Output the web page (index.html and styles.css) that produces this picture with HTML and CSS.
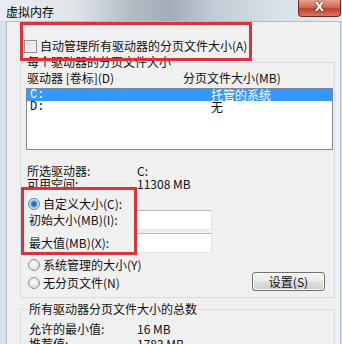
FILE: index.html
```html
<!DOCTYPE html>
<html lang="zh-CN">
<head>
    <meta charset="UTF-8">
    <meta name="viewport" content="width=device-width, initial-scale=1.0">
    <title>虚拟内存</title>
    <link rel="stylesheet" href="styles.css">
</head>
<body>
    <div class="window">
        <div class="titlebar">
            <span class="title">虚拟内存</span>
            <span class="close">X</span>
        </div>

        <div class="client">
            <label class="auto-row">
                <span class="checkbox"></span>
                <span>自动管理所有驱动器的分页文件大小(A)</span>
            </label>

            <fieldset class="group drives">
                <legend>每个驱动器的分页文件大小</legend>
                <div class="list-head">
                    <span>驱动器 [卷标](D)</span>
                    <span>分页文件大小(MB)</span>
                </div>
                <div class="listbox">
                    <div class="row selected"><span>C:</span><span>托管的系统</span></div>
                    <div class="row"><span>D:</span><span>无</span></div>
                </div>

                <div class="info">
                    <span>所选驱动器:</span><span>C:</span>
                    <span>可用空间:</span><span>11308 MB</span>
                </div>

                <div class="option">
                    <span class="radio on"></span>
                    <span>自定义大小(C):</span>
                </div>
                <div class="size-row">
                    <span>初始大小(MB)(I):</span>
                    <input class="textbox" type="text">
                </div>
                <div class="size-row">
                    <span>最大值(MB)(X):</span>
                    <input class="textbox" type="text">
                </div>

                <div class="option system">
                    <span class="radio"></span>
                    <span>系统管理的大小(Y)</span>
                </div>
                <div class="last-row">
                    <div class="option">
                        <span class="radio"></span>
                        <span>无分页文件(N)</span>
                    </div>
                    <button class="btn">设置(S)</button>
                </div>
            </fieldset>

            <fieldset class="group totals">
                <legend>所有驱动器分页文件大小的总数</legend>
                <div class="info totals-info">
                    <span>允许的最小值:</span><span>16 MB</span>
                    <span>推荐值:</span><span>1783 MB</span>
                </div>
            </fieldset>
        </div>

        <!-- red annotation boxes drawn over the dialog -->
        <div class="mark mark-auto"></div>
        <div class="mark mark-custom"></div>
    </div>
</body>
</html>
```

FILE: styles.css
```css
* {
    margin: 0;
    padding: 0;
    box-sizing: border-box;
}

body {
    font-family: "Noto Sans CJK SC", "Liberation Sans", sans-serif;
    font-size: 12px;
    line-height: 12px;
    color: #111;
    background-color: #d6e0ea;
}

.window {
    position: relative;
    width: 342px;
    height: 344px;
    overflow: hidden;
    background-color: #d6e0ea;
}

.titlebar {
    height: 21px;
    display: flex;
    justify-content: space-between;
    align-items: flex-start;
    background: linear-gradient(90deg, #e9edf1 0%, #dfe4e9 22%, #b3bcc5 38%, #a3adb7 50%, #c1cbd5 62%, #d7e0e8 80%, #e6edf3 100%);
}

.title {
    padding: 6px 0 0 6px;
    color: #000;
}

.close {
    width: 43px;
    height: 17px;
    margin-right: 1px;
    border: 1px solid #6d2a22;
    border-top: none;
    border-radius: 0 0 4px 4px;
    background: linear-gradient(#e7a091, #d56a55 45%, #c13f2a 55%, #d77660);
    color: #fff;
    font-family: "DejaVu Sans", sans-serif;
    font-weight: bold;
    font-size: 12px;
    line-height: 15px;
    text-align: center;
    text-shadow: 0 0 2px #5a1a10, 0 0 1px #5a1a10;
}

.client {
    height: 323px;
    margin-left: 6px;
    margin-right: 1px;
    border: 1px solid #b4bec8;
    border-bottom: none;
    background-color: #f0f0f0;
    padding-top: 18px;
}

.auto-row {
    display: flex;
    align-items: center;
    gap: 3px;
    margin-left: 17px;
    height: 12px;
}

.checkbox {
    width: 13px;
    height: 13px;
    border: 1px solid #8e8f8f;
    background: linear-gradient(135deg, #dcdcdc, #f6f6f6);
    box-shadow: inset 0 0 0 1px #f4f4f4;
}

.group {
    margin: 0 5px 0 13px;
    padding: 4px 1px 6px 5px;
    border: 1px solid #d5dfe5;
}

.group legend {
    padding: 0 1px;
    line-height: 12px;
}

.drives {
    margin-top: 4px;
}

.list-head {
    display: grid;
    grid-template-columns: 156px 1fr;
    padding-left: 1px;
}

.listbox {
    margin-top: 4px;
    height: 62px;
    border: 1px solid #828790;
    background-color: #fff;
}

.row {
    display: grid;
    grid-template-columns: 181px 1fr;
    height: 12px;
    padding-left: 3px;
    font-family: "Liberation Mono", "Noto Sans CJK SC", monospace;
}

.row span:last-child {
    font-family: "Noto Sans CJK SC", sans-serif;
}

.row.selected {
    background-color: #3399ff;
    color: #fff;
}

.info {
    display: grid;
    grid-template-columns: 110px 1fr;
    grid-auto-rows: 13px;
    margin-top: 15px;
    padding-left: 1px;
}

.option {
    display: flex;
    align-items: center;
    gap: 3px;
    height: 12px;
    margin-top: 7px;
    padding-left: 2px;
}

.radio {
    width: 12px;
    height: 12px;
    border-radius: 50%;
    border: 1px solid #939393;
    background: radial-gradient(circle at 45% 40%, #ffffff, #e2e2e2 60%, #cdcdcd);
}

.radio.on {
    border-color: #5b84b5;
    background: radial-gradient(circle at 50% 50%, #1c5fb0 0, #2f78c8 2px, #86b8e6 3.5px, #e6e6e6 4.5px, #d0d0d0 6px);
}

.size-row {
    display: grid;
    grid-template-columns: 105px 78px;
    align-items: center;
    padding-left: 3px;
    margin-bottom: 3px;
}

.textbox {
    height: 20px;
    border: 1px solid #dde3e9;
    border-top-color: #b5b9be;
    background-color: #fff;
}

.option.system {
    margin-top: 6px;
}

.last-row {
    display: flex;
    justify-content: space-between;
    align-items: center;
    margin-top: 1px;
    padding-right: 8px;
}

.last-row .option {
    margin-top: 3px;
}

.btn {
    width: 73px;
    height: 19px;
    border: 1px solid #707070;
    border-radius: 3px;
    background: linear-gradient(#f2f2f2, #ebebeb 48%, #dddddd 52%, #cfcfcf);
    box-shadow: inset 0 0 0 1px #fafafa;
    font-family: "Noto Sans CJK SC", sans-serif;
    font-size: 12px;
    line-height: 12px;
    color: #111;
}

.totals {
    margin-top: 5px;
    padding-top: 8px;
    padding-left: 7px;
}

.totals-info {
    grid-template-columns: 108px 1fr;
    grid-auto-rows: 15px;
    margin-top: 0;
}

.mark {
    position: absolute;
    border: 3px solid #d9343c;
}

.mark-auto {
    left: 20px;
    top: 22px;
    width: 232px;
    height: 39px;
}

.mark-custom {
    left: 21px;
    top: 187px;
    width: 116px;
    height: 68px;
}
```
